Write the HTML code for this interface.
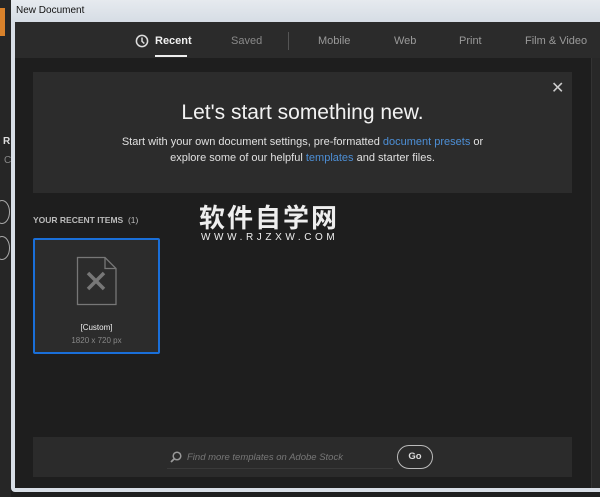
<!DOCTYPE html>
<html><head><meta charset="utf-8"><style>
*{margin:0;padding:0;box-sizing:border-box}
body{width:600px;height:497px;background:#1f1f1f;position:relative;overflow:hidden;font-family:"Liberation Sans",sans-serif}
.a{position:absolute}
</style></head><body>
<div class="a" style="left:0;top:0;width:11px;height:497px;background:#262626"></div>
<div class="a" style="left:0;top:8px;width:5px;height:28px;background:#d9822b"></div>
<div class="a" style="left:3px;top:136px;font-size:10px;color:#ddd;font-weight:bold">R</div>
<div class="a" style="left:4px;top:155px;font-size:10px;color:#888">C</div>
<div class="a" style="left:-6px;top:200px;width:16px;height:24px;border:1.5px solid #aaa;border-radius:50%"></div>
<div class="a" style="left:-6px;top:236px;width:16px;height:24px;border:1.5px solid #aaa;border-radius:50%"></div>
<div class="a" style="left:11px;top:0;width:589px;height:492px;background:#d8dee6;border-radius:4px 0 0 4px"></div>
<div class="a" style="left:11px;top:0;width:589px;height:22px;background:linear-gradient(#e6eaef,#d6dde5)"></div>
<div class="a" style="left:16px;top:5px;font-size:10px;color:#111">New Document</div>
<div class="a" style="left:15px;top:22px;width:585px;height:466px;background:#1e1e1e"></div>
<div class="a" style="left:15px;top:22px;width:585px;height:36px;background:#2b2b2b"></div>
<svg class="a" style="left:135px;top:34px" width="14" height="14" viewBox="0 0 14 14"><circle cx="7" cy="7" r="5.6" fill="none" stroke="#ddd" stroke-width="1.5"/><path d="M7 3.5V7.3L9.3 9.5" fill="none" stroke="#ddd" stroke-width="1.5"/></svg>
<div class="a" style="left:155px;top:35px;font-size:11px;color:#f0f0f0;font-weight:bold">Recent</div>
<div class="a" style="left:155px;top:55px;width:32px;height:2px;background:#eee"></div>
<div class="a" style="left:231px;top:35px;font-size:11px;color:#8a8a8a">Saved</div>
<div class="a" style="left:288px;top:32px;width:1px;height:18px;background:#555"></div>
<div class="a" style="left:318px;top:35px;font-size:11px;color:#9a9a9a">Mobile</div>
<div class="a" style="left:394px;top:35px;font-size:11px;color:#9a9a9a">Web</div>
<div class="a" style="left:459px;top:35px;font-size:11px;color:#9a9a9a">Print</div>
<div class="a" style="left:525px;top:35px;font-size:11px;color:#9a9a9a">Film &amp; Video</div>
<div class="a" style="left:591px;top:58px;width:9px;height:430px;background:#282828;border-left:1px solid #333"></div>
<div class="a" style="left:33px;top:72px;width:539px;height:121px;background:#2c2c2c"></div>
<div class="a" style="left:551px;top:78px;font-size:16px;color:#ccc">✕</div>
<div class="a" style="left:33px;top:101px;width:539px;text-align:center;font-size:21px;color:#f2f2f2">Let's start something new.</div>
<div class="a" style="left:33px;top:134px;width:539px;text-align:center;font-size:11px;line-height:16px;color:#e0e0e0">Start with your own document settings, pre-formatted <span style="color:#4d8fd6">document presets</span> or<br>explore some of our helpful <span style="color:#4d8fd6">templates</span> and starter files.</div>
<div class="a" style="left:33px;top:215px;font-size:8.5px;font-weight:bold;color:#bbb">YOUR RECENT ITEMS &nbsp;<span style="font-weight:normal">(1)</span></div>
<div class="a" style="left:199px;top:202px;font-family:'Noto Sans CJK SC',sans-serif;font-size:26px;font-weight:bold;color:#eee;letter-spacing:2px;line-height:30px">软件自学网</div>
<div class="a" style="left:201px;top:232px;font-size:10px;color:#eee;letter-spacing:3.6px">WWW.RJZXW.COM</div>
<div class="a" style="left:33px;top:238px;width:127px;height:116px;background:#2c2c2c;border:2px solid #1a6fd9;border-radius:2px"></div>
<svg class="a" style="left:76px;top:256px" width="42" height="50" viewBox="0 0 42 50"><path d="M1.5 1.5H29L40 12.5V48.5H1.5Z" fill="none" stroke="#777" stroke-width="1.3"/><path d="M29 1.5V12.5H40" fill="none" stroke="#777" stroke-width="1.3"/><path d="M12 17L28 33M28 17L12 33" stroke="#777" stroke-width="3.5"/></svg>
<div class="a" style="left:33px;top:323px;width:127px;text-align:center;font-size:8px;color:#eee">[Custom]</div>
<div class="a" style="left:33px;top:336px;width:127px;text-align:center;font-size:8px;color:#888">1820 x 720 px</div>
<div class="a" style="left:33px;top:437px;width:539px;height:40px;background:#2b2b2b"></div>
<svg class="a" style="left:170px;top:451px" width="12" height="12" viewBox="0 0 12 12"><circle cx="7" cy="5" r="3.8" fill="none" stroke="#999" stroke-width="1.5"/><path d="M4.3 7.7L1 11" stroke="#999" stroke-width="1.8"/></svg>
<div class="a" style="left:187px;top:452px;font-size:9.5px;font-style:italic;color:#777">Find more templates on Adobe Stock</div>
<div class="a" style="left:167px;top:468px;width:226px;height:1px;background:#3a3a3a"></div>
<div class="a" style="left:397px;top:445px;width:36px;height:24px;border:1.5px solid #bbb;border-radius:12px;color:#ddd;font-size:9.5px;font-weight:bold;text-align:center;line-height:21px">Go</div>
</body></html>
